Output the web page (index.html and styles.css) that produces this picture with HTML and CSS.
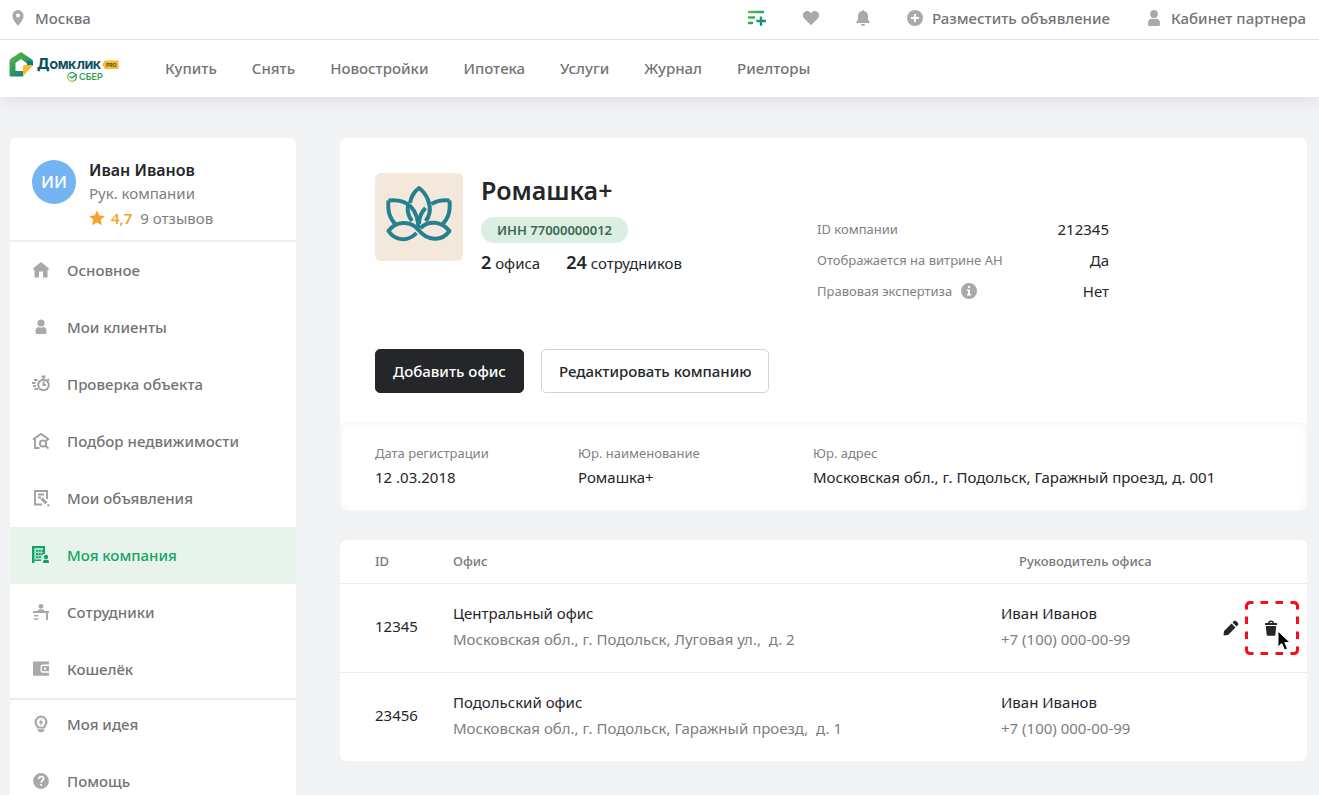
FILE: index.html
```html
<!DOCTYPE html>
<html lang="ru">
<head>
<meta charset="utf-8">
<meta name="viewport" content="width=device-width, initial-scale=1">
<title>Домклик Pro — Моя компания</title>
<link rel="stylesheet" href="styles.css">
</head>
<body>
<header class="header">
  <div class="topbar">
    <a class="topbar-link city" href="#">
      <svg class="icon" viewBox="0 0 16 16" aria-hidden="true"><path fill-rule="evenodd" d="M8 0a5.6 5.6 0 0 0-5.6 5.6C2.400 9.800 8 16 8 16s5.600-6.200 5.600-10.400A5.600 5.600 0 0 0 8 0zm0 3.600a2 2 0 1 1 0 4 2 2 0 0 1 0-4z"/></svg>
      Москва
    </a>
    <nav class="topbar-nav" aria-label="Личные разделы">
      <a class="topbar-link compare" href="#" aria-label="Сравнение">
        <svg viewBox="0 0 20 16" aria-hidden="true"><defs><linearGradient id="cmp" x1="0" y1="0" x2="1" y2="1" gradientUnits="objectBoundingBox"><stop offset="0" stop-color="#6cc23d"/><stop offset=".5" stop-color="#22a567"/><stop offset="1" stop-color="#087b9b"/></linearGradient></defs><path fill="url(#cmp)" d="M2 .8h14a1.200 1.200 0 0 1 0 2.400H2A1.200 1.200 0 0 1 2 .8zM2 6.300h5a1.200 1.200 0 0 1 0 2.400H2a1.200 1.200 0 0 1 0-2.400zM2 11.800h3a1.200 1.200 0 0 1 0 2.400H2a1.200 1.200 0 0 1 0-2.400zM12.800 6.500h2.400v3.300h3.600v2.400h-3.600v3.600h-2.400v-3.600H9.300V9.800h3.500z"/></svg>
      </a>
      <a class="topbar-link heart" href="#" aria-label="Избранное">
        <svg class="icon" viewBox="0 0 16 16" aria-hidden="true"><path d="M8 15.200 1.400 8.700C-.7 6.500-.4 3.500 1.400 2 3.300.4 6.300.6 8 3c1.700-2.400 4.700-2.600 6.600-1 1.800 1.500 2.100 4.500 0 6.700z"/></svg>
      </a>
      <a class="topbar-link bell" href="#" aria-label="Уведомления">
        <svg class="icon" viewBox="0 0 16 16" aria-hidden="true"><path d="M7 1a1 1 0 0 1 2 0c2.700.5 4 2.600 4 5v3.500l1.500 2V13h-13v-1.500L3 9.500V6c0-2.400 1.300-4.500 4-5zM6 14h4a2 2 0 0 1-4 0z"/></svg>
      </a>
      <a class="topbar-link post" href="#">
        <svg class="icon" viewBox="0 0 16 16" aria-hidden="true"><path fill-rule="evenodd" d="M8 0a8 8 0 1 0 0 16A8 8 0 0 0 8 0zM7 4h2v3h3v2H9v3H7V9H4V7h3z"/></svg>
        Разместить объявление
      </a>
      <a class="topbar-link cabinet" href="#">
        <svg class="icon" viewBox="0 0 16 16" aria-hidden="true"><circle cx="8" cy="4" r="3.900"/><path d="M2 13q0-4 4-4.500 2 1 4 0 4 .5 4 4.500v1.500q0 1.500-1.500 1.500h-9Q2 16 2 14.500z"/></svg>
        Кабинет партнера
      </a>
    </nav>
  </div>
  <div class="mainbar">
    <a class="brand" href="#" aria-label="Домклик Pro, Сбер">
      <svg viewBox="0 0 112 34" aria-hidden="true">
        <defs>
          <linearGradient id="house" x1="0" y1="0" x2=".7" y2="1"><stop offset="0" stop-color="#62b846"/><stop offset=".5" stop-color="#35a155"/><stop offset="1" stop-color="#117b83"/></linearGradient>
          <linearGradient id="ring" x1="0" y1="1" x2="1" y2="0"><stop offset="0" stop-color="#f0df26"/><stop offset=".5" stop-color="#2aa745"/><stop offset="1" stop-color="#1699dc"/></linearGradient>
        </defs>
        <path fill="url(#house)" fill-rule="evenodd" d="M12 1 23 8.500Q24 9.300 24 11v3H18v-1.500L12 8 6.500 12v8H14v5.500H2q-1.500 0-1.500-1.500V10Q.5 8.500 2 7.500z"/>
        <path fill="#117b83" d="M18 10h6v5h-6z"/>
        <path fill="#fbb92e" d="M15 14h9L14 25.500V16q0-2 1-2z"/>
        <text class="brand-name" x="28" y="18"><tspan class="brand-cap">Д</tspan>ОМКЛИК</text>
        <path fill="#fbb92e" d="M93 13.500 96 9.500h13.500V18H96z"/>
        <text class="brand-pro" x="97" y="16">PRO</text>
        <circle cx="63" cy="26" r="4.300" fill="none" stroke="url(#ring)" stroke-width="1.300"/>
        <path d="m60.500 25.300 2.300 1.600 5-3.500" fill="none" stroke="#2aa745" stroke-width="1.300"/>
        <text class="brand-sber" x="70" y="29">СБЕР</text>
      </svg>
    </a>
    <nav class="menu" aria-label="Основное меню">
      <a href="#">Купить</a><a href="#">Снять</a><a href="#">Новостройки</a><a href="#">Ипотека</a><a href="#">Услуги</a><a href="#">Журнал</a><a href="#">Риелторы</a>
    </nav>
  </div>
</header>

<div class="layout">
  <aside class="sidebar">
    <div class="profile">
      <div class="avatar">ИИ</div>
      <div class="profile-info">
        <div class="profile-name">Иван Иванов</div>
        <div class="profile-role">Рук. компании</div>
        <div class="rating">
          <svg viewBox="0 0 16 16" aria-hidden="true"><path d="m8 .3 2.300 5.100 5.500.6-4.100 3.700 1.200 5.600L8 12.500l-4.900 2.800 1.200-5.600L.2 6l5.500-.6z"/></svg>
          <b>4,7</b><span>9 отзывов</span>
        </div>
      </div>
    </div>
    <nav class="side-nav" aria-label="Кабинет">
      <a class="side-link" href="#"><svg class="icon" viewBox="0 0 18 18" aria-hidden="true"><path d="M9 1 17 7.500 16.200 9H15.500v7.500H11V10.500H7v6H2.500V9h-.7L1 7.500z"/></svg>Основное</a>
      <a class="side-link" href="#"><svg class="icon" viewBox="0 0 18 18" aria-hidden="true"><circle cx="9" cy="5" r="3.600"/><path d="M3.500 13q0-3.500 3-4Q9 10.200 11.500 9q3 .5 3 4v1.500q0 1.500-1.500 1.500H5q-1.500 0-1.500-1.500z"/></svg>Мои клиенты</a>
      <a class="side-link" href="#"><svg class="icon line" viewBox="0 0 18 18" aria-hidden="true"><circle cx="11.500" cy="10" r="5.300"/><path d="M11.500 6.500V10H14M9.500 1.500h4M11.500 1.500v3M15.500 4l1.500 1.500M2 5h3.500M0 8h3.500M1 11h3M2.500 14H6"/></svg>Проверка объекта</a>
      <a class="side-link" href="#"><svg class="icon line" viewBox="0 0 18 18" aria-hidden="true"><path d="M1 7.500 9 2l8 5.500M3 7v9h4.500M15 7v2"/><circle cx="11" cy="11.500" r="3.100"/><path d="m13.200 13.800 3.300 2.700"/></svg>Подбор недвижимости</a>
      <a class="side-link" href="#"><svg class="icon line" viewBox="0 0 18 18" aria-hidden="true"><path d="M15 10V2H3v13.500h7M6 5.500h6M6 8.500h3"/><path d="m9.500 9.500 4.800 4.800" stroke-width="3"/><path d="m15.500 15.500 1.500 1.500" stroke-width="2"/></svg>Мои объявления</a>
      <a class="side-link active" href="#" aria-current="page"><svg class="icon" viewBox="0 0 18 18" aria-hidden="true"><path d="M0 0h13v8h-2V2.300H2.500V17H0z"/><path d="M4 3.800h2v2H4zm2.800 0h2v2h-2zm2.700 0h1.700v2H9.500zM4 7h2v2H4zm2.800 0h2v2h-2zm2.700 0h1.700v2H9.500zM4 10.300h2v2H4zm2.800 0h2v2h-2zM2.500 13.500H9V15H2.500z"/><path d="M3.500 3h.8v11h-.8zM6 3h.8v11H6zM8.800 3h.8v11h-.8zM3 5.800h8.500v1H3zM3 9.100h7v1H3z" opacity=".35"/><circle cx="14" cy="11" r="2.200"/><path d="M11 17v-1.200q0-2 2-2h2q2 0 2 2V17z"/></svg>Моя компания</a>
      <a class="side-link" href="#"><svg class="icon" viewBox="0 0 18 18" aria-hidden="true"><circle cx="9" cy="3.300" r="2.400"/><path d="M5.500 8Q6 6.200 8 6.200h2q2 0 2.500 1.800H17v2h-1v7h-2v-7H1V8zM2 12h4.500v1.600H2zM2 15.200h4.500v1.600H2z"/></svg>Сотрудники</a>
      <a class="side-link" href="#"><svg class="icon" viewBox="0 0 18 18" aria-hidden="true"><path d="M1 2.500q0-1 1-1h15v3h-6.500q-2 0-2 2v4.200q0 2 2 2H17v3H2q-1 0-1-1z"/><path fill-rule="evenodd" d="M10.500 6H17v5.300h-6.500q-.7 0-.7-.7V6.700q0-.7.700-.7zM12 7.500v2.300h2V7.500z"/></svg>Кошелёк</a>
    </nav>
    <nav class="side-nav support" aria-label="Поддержка">
      <a class="side-link" href="#"><svg class="icon" viewBox="0 0 18 18" aria-hidden="true"><path fill-rule="evenodd" d="M9 .5A6.500 6.500 0 0 0 2.500 7c0 2.700 1.700 3.600 2.700 6.500h7.600c1-2.900 2.700-3.800 2.700-6.500A6.500 6.500 0 0 0 9 .5zm0 2.300A4.200 4.200 0 0 1 13.200 7c0 2-1.200 2.700-2.200 4.700H7C6 9.700 4.800 9 4.800 7A4.200 4.200 0 0 1 9 2.800z"/><path d="M9.800 3.500 6.500 8h2l-.5 3.200L11.600 6.700h-2zM5.500 14.300h7q-.3 3-2.500 3H8q-2.200 0-2.500-3z"/></svg>Моя идея</a>
      <a class="side-link" href="#"><svg class="icon" viewBox="0 0 18 18" aria-hidden="true"><circle cx="9" cy="9" r="7.900"/><path class="cut" d="M6.600 7c0-1.500 1-2.300 2.500-2.300s2.500.8 2.500 2.100c0 1.700-2.500 1.800-2.500 3.900M9.100 12v1.700"/></svg>Помощь</a>
    </nav>
  </aside>

  <main class="content">
    <section class="company">
      <div class="company-main">
        <div class="company-head">
          <svg class="company-logo" viewBox="0 0 88 88" role="img" aria-label="Ромашка+">
            <g fill="none" stroke="#25818f" stroke-width="4" stroke-linejoin="round">
              <path d="M35 30C36 24 40 18 44 15c8 6 12 16 10.500 25q-1 5-4 8"/>
              <path d="M33 32c-1 6 0 11 4 16"/>
              <path d="M13.500 27.500c20-2 30 9 30 29.500"/>
              <path d="M13.500 27.500c-1 11 1 18 8 25"/>
              <path d="M74.500 27.500c-7-.8-13 .5-18 3.500M50.500 35c-4 4-6.500 10-6.500 16"/>
              <path d="M74.500 27.500c1 11-1 18-8 25"/>
              <path d="M41.500 60C33 69 20 68 13.500 58c7-10 22-11 30-1 9 11 23 12 31 1-8-10-21-11-29-3"/>
            </g>
          </svg>
          <div class="company-info">
            <h1>Ромашка+</h1>
            <span class="badge">ИНН 77000000012</span>
            <div class="counts"><span><b>2</b> офиса</span><span><b>24</b> сотрудников</span></div>
          </div>
          <dl class="facts">
            <div><dt>ID компании</dt><dd>212345</dd></div>
            <div><dt>Отображается на витрине АН</dt><dd>Да</dd></div>
            <div><dt>Правовая экспертиза <svg class="icon" viewBox="0 0 16 16" aria-hidden="true"><path fill-rule="evenodd" d="M8 0a8 8 0 1 0 0 16A8 8 0 0 0 8 0zM7 3h2v2H7zM6 6.500h3V11h1v1.500H6V11h1V8H6z"/></svg></dt><dd>Нет</dd></div>
          </dl>
        </div>
        <div class="actions">
          <button class="btn primary" type="button">Добавить офис</button>
          <button class="btn" type="button">Редактировать компанию</button>
        </div>
      </div>
      <dl class="details">
        <div><dt>Дата регистрации</dt><dd>12 .03.2018</dd></div>
        <div><dt>Юр. наименование</dt><dd>Ромашка+</dd></div>
        <div><dt>Юр. адрес</dt><dd>Московская обл., г. Подольск, Гаражный проезд, д. 001</dd></div>
      </dl>
    </section>

    <section class="offices">
      <table>
        <thead>
          <tr><th class="col-id" scope="col">ID</th><th scope="col">Офис</th><th class="col-head" scope="col">Руководитель офиса</th><th class="col-actions" aria-label="Действия"></th></tr>
        </thead>
        <tbody>
          <tr>
            <td class="col-id">12345</td>
            <td>Центральный офис<div class="sub">Московская обл., г. Подольск, Луговая ул., &nbsp;д. 2</div></td>
            <td>Иван Иванов<div class="sub">+7 (100) 000-00-99</div></td>
            <td class="col-actions">
              <div class="row-actions">
                <button class="icon-btn" type="button" aria-label="Редактировать"><svg viewBox="0 0 16 16" aria-hidden="true"><path d="m1 11 7.500-7.500 4 4L5 15l-4.500.5zM9.500 2.500 11 1q1-1 2 0l2 2q1 1 0 2l-1.500 1.500z"/></svg></button>
                <div class="delete">
                  <button class="icon-btn" type="button" aria-label="Удалить"><svg viewBox="0 0 16 16" aria-hidden="true"><path fill-rule="evenodd" d="M5 3q0-2.500 3-2.500T11 3h2.500q.5 0 .5.500V5H2V3.500Q2 3 2.500 3zm1.500 0h3q0-1-1.500-1T6.500 3zM2.800 6h10.400l-.8 8.500q-.1 1.200-1.200 1.200H4.800q-1.100 0-1.200-1.200z"/></svg></button>
                  <svg class="marker" viewBox="0 0 54 54" aria-hidden="true"><path d="M1.500 8.500V5.500Q1.500 1.500 5.500 1.500h3M15.500 1.500H23M30.500 1.500H38M45.500 1.500h3q4 0 4 4v3M52.500 15.500V23M52.500 30.500V38M52.500 45.500v3q0 4-4 4h-3M38 52.500h-7.500M23 52.500h-7.500M8.500 52.500h-3q-4 0-4-4v-3M1.500 38v-7.500M1.500 23v-7.500"/></svg>
                  <svg class="cursor" viewBox="0 0 14 22" aria-hidden="true"><path d="M1 1v16l3.700-3.500 2.800 6.500 3-1.300-2.700-6.200H13z"/></svg>
                </div>
              </div>
            </td>
          </tr>
          <tr>
            <td class="col-id">23456</td>
            <td>Подольский офис<div class="sub">Московская обл., г. Подольск, Гаражный проезд, &nbsp;д. 1</div></td>
            <td>Иван Иванов<div class="sub">+7 (100) 000-00-99</div></td>
            <td class="col-actions"></td>
          </tr>
        </tbody>
      </table>
    </section>
  </main>
</div>
</body>
</html>
```
FILE: styles.css
```css
* { box-sizing: border-box; }
body {
  margin: 0;
  background: #f2f3f5;
  color: #25262a;
  font: 15px/24px "Noto Sans", "Open Sans", sans-serif;
}
a { color: inherit; text-decoration: none; }
dl, dd, h1 { margin: 0; }
svg { display: block; flex: none; }
.icon { fill: #a8a9ab; }
.icon.line { fill: none; stroke: #a0a1a3; stroke-width: 1.9; }
.cut { fill: none; stroke: #fff; stroke-width: 1.7; }

.header { background: #fff; box-shadow: 0 4px 16px rgba(31, 36, 46, .09); }
.topbar {
  display: flex;
  align-items: center;
  justify-content: space-between;
  height: 40px;
  padding: 0 13px 4px 10px;
  border-bottom: 1px solid #e2e2e3;
}
.topbar-nav, .topbar-link { display: flex; align-items: center; }
.topbar-link { gap: 9px; color: #737475; font-weight: 500; }
.topbar-link .icon { width: 16px; height: 16px; }
.compare svg { width: 20px; height: 16px; }
.topbar-nav { gap: 36px; }
.mainbar { display: flex; align-items: center; gap: 44px; height: 57px; padding: 0 0 2px 9px; }
.brand svg { width: 112px; height: 34px; }
.brand-name { font: 800 11px Inter, sans-serif; fill: #0c4f62; }
.brand-cap { font-size: 14px; }
.brand-pro { font: 700 5px Inter, sans-serif; fill: #4d4a2b; }
.brand-sber { font: 600 9px Inter, sans-serif; fill: #2ba24b; }
.menu { display: flex; gap: 35px; color: #737475; font-weight: 500; }

.layout { display: flex; align-items: flex-start; gap: 44px; padding: 41px 12px 0 10px; }
.sidebar { flex: 0 0 286px; background: #fff; border-radius: 6px 6px 0 0; }
.profile { display: flex; gap: 13px; padding: 20px 22px 8px; border-bottom: 2px solid #f0f0f1; }
.avatar {
  display: grid;
  place-items: center;
  width: 44px;
  height: 44px;
  margin-top: 2px;
  border-radius: 50%;
  background: #74b4f2;
  color: #fff;
  font-size: 17px;
  font-weight: 500;
}
.profile-name { font-size: 16px; font-weight: 600; }
.profile-role { line-height: 22px; color: #7d7e80; }
.rating { display: flex; align-items: center; gap: 6px; padding: 2px 0; color: #7d7e80; }
.rating svg { width: 16px; height: 16px; fill: #f7a22b; }
.rating b { margin-right: 2px; color: #f7a22b; font-weight: 600; }
.side-link { display: flex; align-items: center; gap: 17px; height: 57px; padding: 0 0 2px 22px; color: #737475; font-weight: 500; }
.side-link .icon { width: 18px; height: 18px; }
.side-link.active { background: #e7f3eb; color: #12a566; }
.side-link.active .icon { fill: #12a566; }
.support { display: flex; flex-direction: column; gap: 7px; border-top: 2px solid #ebebec; }
.support .side-link { height: 50px; }

.content { flex: 1; min-width: 0; }
.company { background: #fff; border-radius: 6px; }
.company-main { padding: 35px 35px 30px; }
.company-head { display: grid; grid-template-columns: 88px 318px 292px; gap: 18px; min-height: 176px; align-items: start; }
.company-logo { width: 88px; height: 88px; border-radius: 6px; background: #f4e8dd; }
h1 { font-size: 25px; line-height: 34px; font-weight: 600; }
.badge { display: inline-block; margin-top: 10px; padding: 0 16px; border-radius: 13px; background: #dbeee2; color: #3c6851; font-size: 13px; line-height: 26px; font-weight: 600; vertical-align: top; }
.counts { display: flex; gap: 26px; padding-top: 7px; }
.counts b { font-size: 18px; font-weight: 600; }
.facts { padding-top: 40px; }
.facts div { display: flex; justify-content: space-between; align-items: center; height: 31px; }
dt { color: #808183; font-size: 13px; }
.facts dt { display: flex; align-items: center; gap: 9px; }
.facts .icon { width: 16px; height: 16px; }
.actions { display: flex; gap: 17px; }
.btn { height: 44px; padding: 0 17px; border: 1px solid #d2d3d4; border-radius: 5px; background: #fff; color: #25262a; font: inherit; font-weight: 500; }
.btn.primary { border-color: #25262a; background: #25262a; color: #fff; }
.details {
  display: grid;
  grid-template-columns: 203px 235px 1fr;
  padding: 18px 35px 22px;
  border-radius: 0 0 6px 6px;
  box-shadow: inset 0 0 8px rgba(0, 0, 0, .05);
}

.offices { margin-top: 29px; overflow: hidden; background: #fff; border-radius: 6px; }
table { width: 100%; border-collapse: collapse; table-layout: fixed; }
th { height: 43px; padding: 0; color: #77787a; font-size: 13px; font-weight: 500; text-align: left; }
th.col-head { padding-left: 18px; }
td { padding: 16px 0 20px; line-height: 26px; }
tbody tr { border-top: 1px solid #ededee; }
.col-id { width: 113px; padding-left: 35px; }
.col-head { width: 220px; }
.col-actions { width: 84px; padding: 0; }
.content .col-head { width: 222px; }
.sub { color: #7d7e80; }
.row-actions { display: flex; gap: 24px; }
.icon-btn { display: block; padding: 0; border: 0; background: none; }
.icon-btn svg { width: 16px; height: 16px; fill: #25262a; }
.delete { position: relative; }
.marker { position: absolute; left: -18px; top: -19px; width: 54px; height: 54px; overflow: visible; fill: none; stroke: #f90d13; stroke-width: 3; pointer-events: none; }
.cursor { position: absolute; left: 14px; top: 10px; width: 14px; height: 22px; fill: #000; stroke: #fff; stroke-width: 1; pointer-events: none; }
```
